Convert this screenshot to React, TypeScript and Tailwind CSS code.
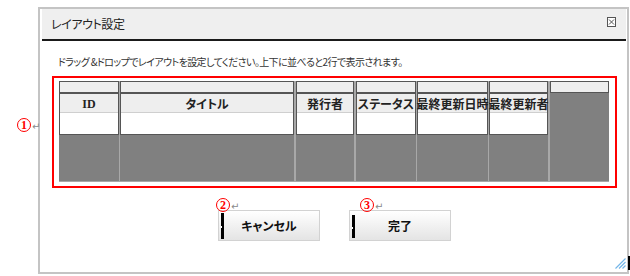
import React from 'react';

const jp = "font-['Noto_Sans_CJK_JP',sans-serif] [font-feature-settings:'palt']";

interface Column {
  label: string | null;
  width: string;
  gap: string;
  serif?: boolean;
}

const columns: Column[] = [
  { label: 'ID', width: 'w-[60px]', gap: '', serif: true },
  { label: 'タイトル', width: 'w-[174px]', gap: 'ml-px' },
  { label: '発行者', width: 'w-[58px]', gap: 'ml-[2px]' },
  { label: 'ステータス', width: 'w-[60px]', gap: 'ml-[2px]' },
  { label: '最終更新日時', width: 'w-[71px]', gap: 'ml-px' },
  { label: '最終更新者', width: 'w-[59px]', gap: 'ml-px' },
  { label: null, width: 'w-[59px]', gap: 'ml-[2px]' },
];

const Marker: React.FC<{ n: string; className: string }> = ({ n, className }) => (
  <div className={`absolute flex items-center ${className}`}>
    <span className="w-[14px] h-[14px] rounded-full border-[1.5px] border-[#ff0000] text-[#ff0000] flex items-center justify-center text-[12px] font-bold leading-none font-['Liberation_Serif',serif]">
      {n}
    </span>
    <span className="ml-px mt-[3px] text-[10px] leading-none text-[#8a8a8a] font-['DejaVu_Sans',sans-serif]">↵</span>
  </div>
);

const DialogButton: React.FC<{ label: string; caretClass: string }> = ({ label, caretClass }) => (
  <button className="relative w-[102px] h-[31px] border border-[#d2d2d2] bg-linear-to-b from-white to-[#e4e4e4] flex items-center justify-center">
    <span className={`absolute left-[2px] w-[3px] bg-black ${caretClass}`}>
      <span className="absolute left-0 top-1/2 w-px h-[2px] bg-white" />
    </span>
    <span className={`${jp} text-[12px] font-bold text-[#111] leading-none`}>{label}</span>
  </button>
);

export default function App() {
  return (
    <div className={`relative w-[630px] h-[276px] bg-white pt-[7px] pl-[38px] ${jp}`}>
      <div className="relative w-[591px] h-[267px] border-2 border-[#c4c4c4] bg-white flex flex-col">
        {/* title bar */}
        <div className="ml-[2px] mr-px h-[32px] bg-[#efefef] border-b-2 border-[#1a1a1a] flex items-center justify-between pl-[9px]">
          <span className="text-[12px] tracking-[-0.4px] leading-none text-[#222]">レイアウト設定</span>
          <svg width="9" height="10" viewBox="0 0 9 10" className="self-start mt-[8px] mr-[10px]">
            <rect x="0.5" y="0.5" width="8" height="9" fill="white" stroke="#555" />
            <path d="M2 2.5 L7 7.5 M7 2.5 L2 7.5" stroke="#555" strokeWidth="1" />
          </svg>
        </div>

        <p className="mt-[14px] pl-[18px] text-[10px] tracking-[-0.6px] leading-[14px] text-[#333] whitespace-nowrap">
          ドラッグ &ドロップでレイアウトを設定してください。上下に並べると2行で表示されます。
        </p>

        {/* layout area */}
        <div className="mt-[7px] ml-[12px] w-[565px] h-[112px] border-2 border-[#ff0000] pt-[3px] pl-[5px]">
          <div className="flex w-[550px] h-[101px] bg-[#a8a8a8] pb-px">
            {columns.map((col, i) => (
              <div key={i} className={`${col.width} ${col.gap} bg-[#808080] flex flex-col`}>
                <div className="h-[12px] bg-[#eeeeee] border border-[#555]" />
                {col.label && (
                  <div className="border border-[#555] flex flex-col">
                    <div className="h-[19px] bg-[#eeeeee] border-b border-[#cfcfcf] flex items-center justify-center pt-[2px]">
                      <span
                        className={`whitespace-nowrap text-[12px] font-bold leading-none text-[#222] ${
                          col.serif ? "font-['Liberation_Serif',serif]" : ''
                        }`}
                      >
                        {col.label}
                      </span>
                    </div>
                    <div className="h-[21px] bg-white" />
                  </div>
                )}
              </div>
            ))}
          </div>
        </div>

        <div className="mt-[22px] pl-[2px] flex justify-center gap-[29px]">
          <DialogButton label="キャンセル" caretClass="top-[2px] h-[26px]" />
          <DialogButton label="完了" caretClass="top-[4px] h-[23px]" />
        </div>

        {/* resize grip */}
        <svg width="11" height="11" viewBox="0 0 11 11" className="absolute right-px bottom-[3px]">
          <path d="M10.5 0.5 L0.5 10.5 M10.5 4 L4 10.5 M10.5 7.5 L7.5 10.5" stroke="#74b6e8" strokeWidth="1.2" />
        </svg>
      </div>

      <div className="absolute left-[628px] top-[256px] w-[2px] h-[14px] bg-black" />

      <Marker n="1" className="left-[17px] top-[118px]" />
      <Marker n="2" className="left-[216px] top-[198px]" />
      <Marker n="3" className="left-[360px] top-[198px]" />
    </div>
  );
}
